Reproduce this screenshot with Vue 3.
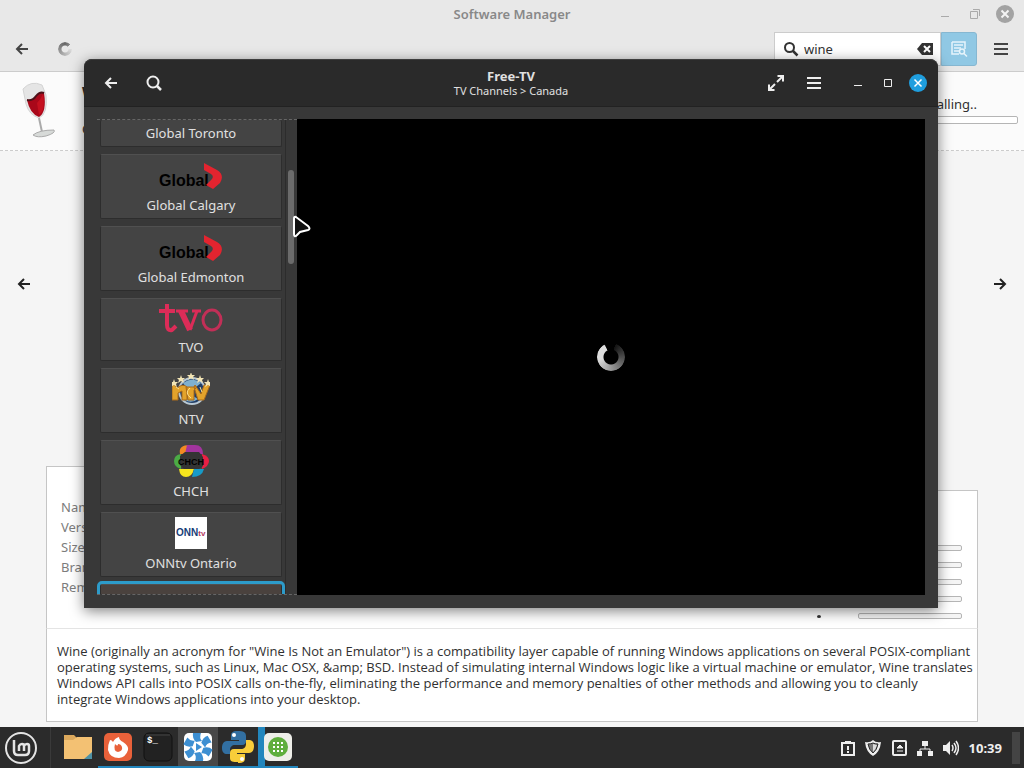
<template>
  <div class="desktop">
    <main class="manager">
      <header class="manager-head">
        <div class="titlebar">
          <h1>Software Manager</h1>
          <div class="win-controls">
            <button aria-label="Minimize">
              <svg width="20" height="20" viewBox="0 0 20 20"><path d="M6 12.500h8" stroke="#aaa" /></svg>
            </button>
            <button aria-label="Restore">
              <svg width="20" height="20" viewBox="0 0 20 20" fill="none" stroke="#aaa"><path d="M5.500 7.500h7v7h-7zM8 5.500h6.500V12" /></svg>
            </button>
            <button aria-label="Close">
              <svg width="20" height="20" viewBox="0 0 20 20"><circle cx="10" cy="10" r="9" fill="#a3a3a3" /><path d="M6.500 6.500l7 7M13.500 6.500l-7 7" stroke="#f4f4f4" stroke-width="2" /></svg>
            </button>
          </div>
        </div>
        <div class="toolbar">
          <button class="tool" aria-label="Back">
            <svg width="16" height="16" viewBox="0 0 16 16" fill="none" stroke="#444" stroke-width="2"><path d="M14 8H3M8 3L3 8l5 5" /></svg>
          </button>
          <span class="spinner light"></span>
          <div class="search">
            <svg width="16" height="16" viewBox="0 0 16 16" fill="none" stroke="#333" stroke-width="2"><circle cx="6.500" cy="6.500" r="4.500" /><path d="M10 10l4.500 4.500" stroke-width="2.500" /></svg>
            <input v-model="query" type="text" aria-label="Search packages" />
            <button aria-label="Clear search">
              <svg width="16" height="14" viewBox="0 0 16 14"><path d="M0 7l5-6h11v12H5z" fill="#333" /><path d="M7 4l6 6M13 4l-6 6" stroke="#fff" stroke-width="2" /></svg>
            </button>
          </div>
          <button class="toggle" aria-label="Search in descriptions">
            <svg width="18" height="18" viewBox="0 0 18 18" fill="none" stroke="#e6f4fb" stroke-width="1.500"><path d="M2 2h13v7M2 2v12h7M4 5h9M4 8h7M4 11h5" /><circle cx="12" cy="11.500" r="2.500" /><path d="M14 13.500l3 3" /></svg>
          </button>
          <button class="tool menu" aria-label="Menu">
            <svg width="16" height="16" viewBox="0 0 16 16"><path d="M1 3h14M1 8h14M1 13h14" stroke="#444" stroke-width="2" /></svg>
          </button>
        </div>
      </header>

      <section class="app-head">
        <svg class="wine" width="36" height="58" viewBox="0 0 36 58">
          <path d="M2 8Q10 -1 21 4L25 14Q27 33 18 37Q8 34 5 23z" fill="#e5e5e5" stroke="#d4d4d4" />
          <path d="M6 19Q12 20 15 15Q19 10 23 12Q26 31 18 36Q9 33 6 19z" fill="#a9081a" />
          <path d="M6 19Q12 20 15 15Q19 10 23 12" fill="none" stroke="#4d1018" stroke-width="2" />
          <path d="M16 22Q20 18 22 13Q25 29 18 34z" fill="#c5101f" />
          <path d="M18 37L21 51" stroke="#aaa" stroke-width="2" />
          <path d="M12 54Q18 49 33 49Q35 52 25 55Q16 57 12 54z" fill="#d7dad8" stroke="#aaa" />
        </svg>
        <div class="app-name">
          <h2>Wine</h2>
          <p>Open</p>
        </div>
        <div class="install">
          <span>Installing..</span>
          <div class="bar"></div>
        </div>
      </section>

      <section class="gallery">
        <button aria-label="Previous">
          <svg width="16" height="16" viewBox="0 0 16 16" fill="none" stroke="#222" stroke-width="2"><path d="M14 8H3M8 3L3 8l5 5" /></svg>
        </button>
        <button aria-label="Next">
          <svg width="16" height="16" viewBox="0 0 16 16" fill="none" stroke="#222" stroke-width="2"><path d="M2 8h11M8 3l5 5-5 5" /></svg>
        </button>
      </section>

      <section class="package">
        <div class="details">
          <dl>
            <dt v-for="label in fields" :key="label">{{ label }}</dt>
          </dl>
          <div class="ratings">
            <div v-for="n in 5" :key="n" class="rating">
              <i></i>
              <div class="bar"></div>
            </div>
          </div>
        </div>
        <p class="description">
          <span v-for="line in description" :key="line">{{ line }}</span>
        </p>
      </section>
    </main>

    <section class="tv">
      <header class="tv-head">
        <div class="group start">
          <button aria-label="Back">
            <svg width="16" height="16" viewBox="0 0 16 16" fill="none" stroke="#eee" stroke-width="2"><path d="M14 8H3M8 3L3 8l5 5" /></svg>
          </button>
          <button aria-label="Search">
            <svg width="16" height="16" viewBox="0 0 16 16" fill="none" stroke="#eee" stroke-width="2"><circle cx="7" cy="7" r="5.500" /><path d="M11 11l4 4" stroke-width="2.500" /></svg>
          </button>
        </div>
        <div class="tv-title">
          <h2>Free-TV</h2>
          <p>TV Channels &gt; Canada</p>
        </div>
        <div class="group end">
          <button aria-label="Fullscreen">
            <svg width="18" height="18" viewBox="0 0 18 18" fill="none" stroke="#eee" stroke-width="2"><path d="M10.500 2H16v5.500M16 2l-6 6M7.500 16H2v-5.500M2 16l6-6" /></svg>
          </button>
          <button aria-label="Menu" class="tv-menu">
            <svg width="16" height="16" viewBox="0 0 16 16"><path d="M1 3h14M1 8h14M1 13h14" stroke="#eee" stroke-width="2" /></svg>
          </button>
          <button aria-label="Minimize">
            <svg width="18" height="18" viewBox="0 0 18 18"><path d="M5 11.500h8" stroke="#eee" /></svg>
          </button>
          <button aria-label="Maximize">
            <svg width="18" height="18" viewBox="0 0 18 18"><path d="M5.500 5.500h7v7h-7z" fill="none" stroke="#eee" /></svg>
          </button>
          <button aria-label="Close">
            <svg width="18" height="18" viewBox="0 0 18 18"><circle cx="9" cy="9" r="9" fill="#1f9ede" /><path d="M5.500 5.500l7 7M12.500 5.500l-7 7" stroke="#fff" stroke-width="1.500" /></svg>
          </button>
        </div>
      </header>
      <div class="tv-body">
        <nav class="channels">
          <div class="list">
            <button v-for="c in channels" :key="c.name" class="channel" :class="c.logo">
              <svg v-if="c.logo === 'global'" width="66" height="32" viewBox="0 0 66 32">
                <text x="1" y="24" class="global-text">Global</text>
                <path d="M46 1l13 7q8 5 3 13l-7 6-7-4 6-6q2-3-1-5l-7-4z" fill="#e3242f" />
              </svg>
              <svg v-else-if="c.logo === 'tvo'" width="66" height="30" viewBox="0 0 66 30" fill="none" stroke="#dc2c58">
                <path d="M9 1v21q0 6 5 5l4-4M1 8h16" stroke-width="4" />
                <path d="M18 8h12M34 8h9" stroke-width="3" />
                <path d="M23 8l9 19" stroke-width="6" />
                <path d="M32 27l7-19" stroke-width="3" />
                <ellipse cx="54" cy="17" rx="9" ry="10" stroke-width="3" stroke="#c22f57" />
              </svg>
              <svg v-else-if="c.logo === 'ntv'" width="38" height="32" viewBox="0 0 38 32">
                <circle cx="20" cy="18" r="14" fill="#b9c9d4" />
                <circle cx="20" cy="18" r="12" fill="#223e67" />
                <path d="M11 10q9-7 18 0l-5 4H14zM12 27q8 4 14-1l-5-3z" fill="#7fb0cf" />
                <path d="M0 12h3l2 3q6-5 10-1v13h-5v-9l-4 2v7H0zM14 14h11l-3 3v10h-6zM23 12l6 9 3-9h6l-6 15h-6l-4-13z" fill="#e3a32b" stroke="#a96a1a" />
                <path d="M18 15q-6 5 1 10M4 14l3 2M28 14l2 5" stroke="#ffe391" fill="none" />
                <path v-for="s in stars" :key="s" :d="s" fill="#f3e5b5" />
              </svg>
              <svg v-else-if="c.logo === 'chch'" width="36" height="34" viewBox="0 0 36 34">
                <path d="M7 10Q5 1 17 1l-4 9z" fill="#f28a22" />
                <path d="M14 1h8q8 0 8 9H12z" fill="#a2349e" />
                <path d="M8 10Q1 11 1 17t7 8z" fill="#4bab45" />
                <path d="M29 10q7 2 7 7t-7 8z" fill="#e91f43" />
                <path d="M6 25h15q-2 8-8 8t-7-8z" fill="#f7e51d" />
                <path d="M21 25h10q-2 8-12 8z" fill="#179bc8" />
                <path d="M12 8h14l4 5v9l-4 3H11l-4-4v-9z" fill="#343434" />
                <text x="18" y="21" text-anchor="middle" class="chch-text">CHCH</text>
              </svg>
              <svg v-else-if="c.logo === 'onn'" width="32" height="32" viewBox="0 0 32 32">
                <path d="M0 0h32v32H0z" fill="#fff" />
                <text x="1" y="19" class="onn-text">ONN<tspan class="onn-tv">tv</tspan></text>
              </svg>
              <span>{{ c.name }}</span>
            </button>
            <button class="channel selected" aria-label="Selected channel"></button>
          </div>
          <div class="scroll"><i></i></div>
        </nav>
        <div class="video"><span class="spinner"></span></div>
      </div>
    </section>

    <footer class="panel">
      <button class="start-menu" aria-label="Menu">
        <svg width="34" height="34" viewBox="0 0 34 34" fill="none" stroke="#e4e4e4"><circle cx="17" cy="17" r="15" stroke-width="2" /><path d="M10 9v11q0 4 4 4h7q4 0 4-4v-5q0-2-2-2t-3 2v5M20 15q0-2-2-2t-3 2v5" stroke-width="2.500" /></svg>
      </button>
      <div class="tasks">
        <button class="files" aria-label="Files">
          <svg width="30" height="30" viewBox="0 0 30 30"><path d="M1 3h10l3 3h15v21H1z" fill="#dba85c" /><path d="M1 8h9l4-3h15v22H1z" fill="#f3c173" /><path d="M29 20v7h-8z" fill="#4e91a5" /></svg>
        </button>
        <button class="open" aria-label="Firefox">
          <svg width="30" height="30" viewBox="0 0 30 30"><rect x="1" y="1" width="28" height="28" rx="5" fill="#e9613a" /><path d="M7 8q2 0 3 2 2-4 6-5 0 3 4 5 6 4 5 8-2 7-9 8-9 0-11-8 0-6 2-10z" fill="#fff" /><path d="M12 12q-2 7 3 8 5-1 4-5-1-3-4-3 0 3-3 0z" fill="#e9613a" /></svg>
        </button>
        <button class="open" aria-label="Terminal">
          <svg width="30" height="30" viewBox="0 0 30 30"><rect x="1" y="1" width="28" height="28" rx="5" fill="#222" stroke="#111" /><path d="M3 3h24" stroke="#444" /><text x="4" y="11" class="prompt">$_</text></svg>
        </button>
        <button class="open active" aria-label="Hypnotix">
          <svg width="30" height="30" viewBox="0 0 30 30"><rect x="1" y="1" width="28" height="28" rx="5" fill="#fff" /><g fill="#3d8fd2"><path v-for="a in blades" :key="a" d="M10 1q-1 5 3 9l6-1Q16 6 18 1z" :transform="`rotate(${a} 15 15)`" /></g><path d="M13 11l6 4-6 4z" fill="#3d8fd2" /></svg>
        </button>
        <button class="open" aria-label="Python">
          <svg width="34" height="34" viewBox="0 0 34 34"><path d="M17 1c-6 0-7 2-7 5v4h8v1H6c-4 0-5 4-5 7 0 4 2 6 5 6h3v-4c0-3 2-5 5-5h7c3 0 4-2 4-4V6c0-4-3-5-8-5z" fill="#326fa1" /><path d="M17 33c6 0 7-2 7-5v-4h-8v-1h12c4 0 5-4 5-7 0-4-2-6-5-6h-3v4c0 3-2 5-5 5h-7c-3 0-4 2-4 4v5c0 4 3 4 8 4z" fill="#f8cd3a" /><circle cx="13" cy="5" r="2" fill="#fff" /><circle cx="21" cy="29" r="2" fill="#fff" /></svg>
        </button>
        <button class="open busy" aria-label="Software Manager">
          <svg width="30" height="30" viewBox="0 0 30 30"><rect x="1" y="1" width="28" height="28" rx="5" fill="#eeeee9" /><circle cx="15" cy="15" r="10" fill="#5fae3d" /><path d="M10 11h10M10 15h10M10 19h10" stroke="#fff" stroke-width="2" stroke-dasharray="2" /></svg>
        </button>
      </div>
      <div class="tray">
        <svg width="16" height="16" viewBox="0 0 16 16" fill="none" stroke="#eee" stroke-width="2"><path d="M3 3h12v12H3zM6 2h6M9 6v4M9 11v2" /></svg>
        <svg width="16" height="16" viewBox="0 0 16 16"><path d="M8 0q3 3 8 2-1 10-8 14Q1 12 0 2q5 1 8-2z" fill="#eee" /><path d="M8 3q2 1 5 1-1 6-5 9-4-3-5-9 3 0 5-1z" fill="#777" stroke="#2b2b2b" /><path d="M8 4v8q3-3 4-7z" fill="#ddd" /></svg>
        <svg width="16" height="16" viewBox="0 0 16 16" fill="none" stroke="#eee" stroke-width="2"><rect x="2" y="1" width="13" height="14" rx="1" /><path d="M6 8l3-3 3 3zM6 11h6" fill="#eee" stroke-width="1" /></svg>
        <svg width="16" height="16" viewBox="0 0 16 16"><path d="M5 1h6v5H5zM0 11h5v5H0zM11 11h5v5h-5z" fill="#eee" /><path d="M8 6v3M3 11V9h10v2" fill="none" stroke="#eee" /></svg>
        <svg width="16" height="16" viewBox="0 0 16 16"><path d="M0 5h3l4-4v14l-4-4H0z" fill="#eee" /><path d="M9 5q2 3 0 6M11 3q4 5 0 10M13 1q5 7 0 14" fill="none" stroke="#eee" stroke-width="1.500" /></svg>
        <time>10:39</time>
        <i class="corner"></i>
      </div>
    </footer>

    <svg class="cursor" width="20" height="24" viewBox="0 0 20 24"><path d="M3 2q-2-1-2 2v15q0 4 3 1l3-3 8-2q3-1 0-4z" fill="#111" stroke="#fff" stroke-width="2" /></svg>
  </div>
</template>

<script setup>
  import { ref } from 'vue';

  const query = ref('wine');

  const fields = ['Name:', 'Version:', 'Size:', 'Branch:', 'Remote:'];

  const description = [
    'Wine (originally an acronym for "Wine Is Not an Emulator") is a compatibility layer capable of running Windows applications on several POSIX-compliant',
    'operating systems, such as Linux, Mac OSX, &amp; BSD. Instead of simulating internal Windows logic like a virtual machine or emulator, Wine translates',
    'Windows API calls into POSIX calls on-the-fly, eliminating the performance and memory penalties of other methods and allowing you to cleanly',
    'integrate Windows applications into your desktop.',
  ];

  const channels = [
    { name: 'Global Toronto', logo: 'cut' },
    { name: 'Global Calgary', logo: 'global' },
    { name: 'Global Edmonton', logo: 'global' },
    { name: 'TVO', logo: 'tvo' },
    { name: 'NTV', logo: 'ntv' },
    { name: 'CHCH', logo: 'chch' },
    { name: 'ONNtv Ontario', logo: 'onn' },
  ];

  const stars = [[2, 9], [9, 5], [19, 2], [28, 5], [36, 9]].map(
    ([x, y]) => `M${x} ${y - 3}l1 3h3l-2 2 1 3-3-2-3 2 1-3-2-2h3z`
  );

  const blades = [0, 60, 120, 180, 240, 300];
</script>

<style>
  body {
    margin: 0;
  }
</style>

<style scoped>
  * {
    box-sizing: border-box;
  }

  .desktop {
    position: relative;
    display: flex;
    flex-direction: column;
    min-height: 100vh;
    overflow: hidden;
    background: #f5f5f5;
    color: #303030;
    font: 13px/16px "Noto Sans", sans-serif;
  }

  h1, h2, p, dl {
    margin: 0;
    font-size: 13px;
  }

  button {
    display: flex;
    align-items: center;
    justify-content: center;
    padding: 0;
    border: 0;
    background: none;
    color: inherit;
    font: inherit;
  }

  svg {
    flex: none;
  }

  .manager {
    flex: 1;
    display: flex;
    flex-direction: column;
  }

  .manager-head {
    background: #e8e8e8;
    border-bottom: 1px solid #ccc;
  }

  .titlebar {
    display: grid;
    grid-template-columns: 1fr auto 1fr;
    align-items: center;
    height: 28px;
    padding: 0 9px;
    color: #888;
  }

  .titlebar h1 {
    grid-column: 2;
    font-weight: 600;
  }

  .win-controls {
    display: flex;
    justify-content: flex-end;
    gap: 10px;
  }

  .toolbar {
    display: flex;
    align-items: center;
    height: 43px;
    padding: 0 15px 2px 14px;
  }

  .spinner {
    width: 28px;
    height: 28px;
    border-radius: 50%;
    background: conic-gradient(from 20deg, #111, #ddd 240deg, #ddd 310deg, transparent 315deg);
    mask: radial-gradient(circle, transparent 7px, #000 8px);
  }

  .spinner.light {
    width: 14px;
    height: 14px;
    margin-left: 28px;
    background: conic-gradient(from 90deg, #ddd, #666 270deg, #888 315deg, transparent 320deg);
    mask: radial-gradient(circle, transparent 3px, #000 4px);
  }

  .search {
    display: flex;
    align-items: center;
    gap: 5px;
    width: 167px;
    height: 34px;
    margin-left: auto;
    padding: 0 7px 0 8px;
    border: 1px solid #ccc;
    background: #fff;
  }

  .search input {
    flex: 1;
    min-width: 0;
    padding: 0;
    border: 0;
    outline: 0;
    background: none;
    color: #303030;
    font: inherit;
  }

  .toggle {
    width: 36px;
    height: 34px;
    border: 1px solid #86b7d1;
    border-radius: 0 3px 3px 0;
    background: #90c8e4;
  }

  .menu {
    margin-left: 16px;
  }

  .app-head {
    display: flex;
    height: 79px;
    padding: 9px 6px 0 21px;
    border-bottom: 1px dashed #ccc;
    background: #fbfbfb;
  }

  .app-name {
    margin-left: 25px;
  }

  .app-name h2 {
    font-size: 18px;
    line-height: 24px;
  }

  .app-name p {
    margin-top: 16px;
  }

  .install {
    width: 126px;
    margin: 15px 0 0 auto;
  }

  .install span {
    display: block;
    padding-right: 41px;
    text-align: right;
  }

  .bar {
    height: 6px;
    border: 1px solid #b5b5b5;
    border-radius: 2px;
    background: #f5f5f5;
  }

  .install .bar {
    height: 8px;
    margin-top: 4px;
    background: #fff;
  }

  .gallery {
    flex: 1;
    display: flex;
    align-items: center;
    justify-content: space-between;
    padding: 0 16px 49px;
  }

  .package {
    margin: 0 46px 5px;
  }

  .details {
    display: flex;
    height: 162px;
  }

  .details dl {
    flex: 1;
    padding: 30px 14px 0;
    border: 1px solid #c5c5c5;
    border-width: 1px 0 0 1px;
    background: #fff;
    color: #7c7c7c;
  }

  .details dt {
    line-height: 20px;
  }

  .ratings {
    flex: 1;
    display: flex;
    flex-direction: column;
    gap: 11px;
    margin-top: 24px;
    padding: 54px 15px 0;
    border: 1px solid #c5c5c5;
    border-width: 1px 1px 0 0;
    background: #fff;
  }

  .rating {
    display: flex;
    align-items: center;
    justify-content: flex-end;
    gap: 37px;
  }

  .rating i {
    width: 4px;
    height: 3px;
    border-radius: 50%;
    background: #333;
  }

  .rating .bar {
    width: 104px;
  }

  .description {
    padding: 14px 10px;
    border: 1px solid #c5c5c5;
    border-top-color: #e4e4e4;
    background: #fff;
    font-family: "Open Sans", sans-serif;
  }

  .description span {
    display: block;
    white-space: nowrap;
  }

  .tv {
    position: absolute;
    inset: 59px 86px 160px 84px;
    display: flex;
    flex-direction: column;
    border-radius: 8px 8px 0 0;
    background: #383838;
    color: #e0e0e0;
    box-shadow: 0 3px 14px rgba(0, 0, 0, 0.5);
  }

  .tv-head {
    display: grid;
    grid-template-columns: 1fr auto 1fr;
    align-items: center;
    height: 48px;
    padding: 0 11px;
    border-top: 1px solid #3d3d3d;
    border-bottom: 1px solid #222;
    border-radius: 8px 8px 0 0;
    background: #2a2a2a;
  }

  .tv-title {
    padding-bottom: 2px;
    text-align: center;
  }

  .tv-title p {
    font-size: 11px;
    line-height: 13px;
  }

  .group {
    display: flex;
    align-items: center;
  }

  .start {
    gap: 27px;
    padding-left: 8px;
  }

  .end {
    justify-content: flex-end;
    gap: 12px;
  }

  .tv-menu {
    margin: 0 15px 0 9px;
  }

  .tv-body {
    flex: 1;
    display: flex;
    min-height: 0;
    padding: 12px 13px 13px;
  }

  .channels {
    display: flex;
    width: 200px;
    border: 1px dashed #666;
    border-width: 1px 0;
    overflow: hidden;
  }

  .list {
    display: flex;
    flex-direction: column;
    gap: 7px;
    width: 189px;
    padding: 0 3px;
    border-right: 1px solid #2c2c2c;
  }

  .channel {
    flex: none;
    flex-direction: column;
    justify-content: flex-start;
    height: 65px;
    padding-top: 7px;
    border: 1px solid #2d2d2d;
    border-top-color: #505050;
    border-radius: 2px;
    background: #444;
    line-height: 22px;
  }

  .channel.cut {
    height: 27px;
    padding-top: 2px;
    border-top: 0;
  }

  .channel.tvo,
  .channel.ntv,
  .channel.onn {
    padding-top: 4px;
    line-height: 28px;
  }

  .channel.tvo {
    height: 63px;
  }

  .channel.chch {
    padding-top: 3px;
    line-height: 26px;
  }

  .channel.selected {
    outline: 3px solid #2d9bc9;
    background: #4a423e;
  }

  .scroll {
    padding: 50px 3px 0 2px;
  }

  .scroll i {
    display: block;
    width: 6px;
    height: 94px;
    border-radius: 3px;
    background: #6b6b6b;
  }

  .video {
    flex: 1;
    display: flex;
    align-items: center;
    justify-content: center;
    background: #000;
  }

  .global-text {
    font: bold 16px "Liberation Sans", sans-serif;
  }

  .chch-text {
    font: bold 9px "Liberation Sans", sans-serif;
  }

  .onn-text {
    font: bold 10px "Liberation Sans", sans-serif;
    fill: #174078;
  }

  .onn-tv {
    font-size: 8px;
    fill: #b33b62;
  }

  .panel {
    display: flex;
    height: 41px;
    padding: 0 4px;
    background: #2b2b2b;
    color: #eee;
  }

  .start-menu {
    justify-content: flex-start;
    width: 47px;
    border-right: 1px solid #3a3a3a;
  }

  .tasks {
    display: flex;
    padding-left: 7px;
  }

  .tasks button {
    width: 40px;
    border-bottom: 2px solid transparent;
  }

  .tasks .open {
    border-bottom-color: #2286bd;
  }

  .tasks .active {
    background: #484848;
  }

  .tasks .busy {
    background: linear-gradient(90deg, #2286bd 7px, transparent 7px);
  }

  .prompt {
    font: bold 9px "Liberation Mono", monospace;
    fill: #fff;
  }

  .tray {
    display: flex;
    align-items: center;
    gap: 10px;
    margin-left: auto;
  }

  .tray time {
    font-weight: bold;
  }

  .corner {
    width: 8px;
    height: 32px;
    background: #444;
  }

  .cursor {
    position: absolute;
    left: 293px;
    top: 215px;
  }
</style>
